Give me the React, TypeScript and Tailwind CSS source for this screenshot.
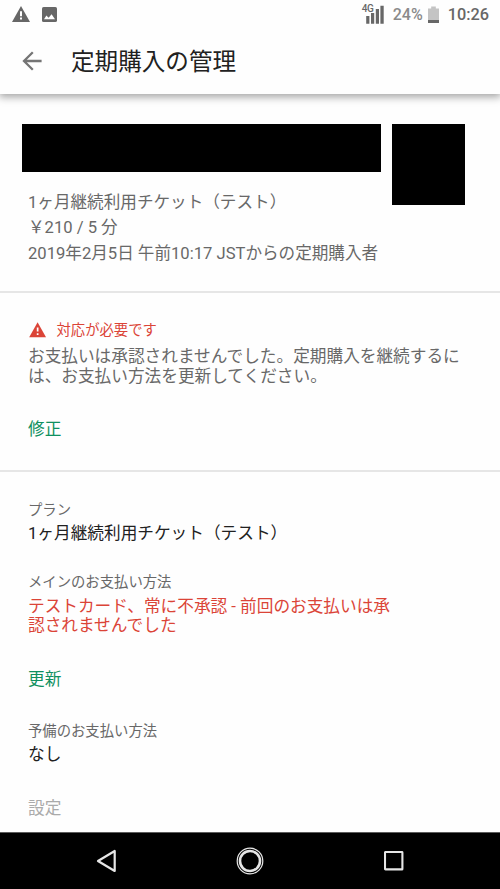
import type { ReactNode } from 'react'

function StatusBar() {
  return (
    <div className="flex h-[29px] items-center pl-3 pr-[11px] text-[#676767]">
      <svg width="18" height="16" viewBox="0 0 18 16" className="-mt-px mr-3">
        <path d="M9 0 18 16H0z" fill="currentColor" />
        <path d="M8 5.2h2v5H8zM8 11.6h2v2H8z" fill="#fff" />
      </svg>
      <svg width="15" height="15" viewBox="0 0 15 15" className="-mt-px">
        <rect width="15" height="15" rx="1.6" fill="currentColor" />
        <path d="M2 12.2 4.4 8.4 6.6 10.8 9.6 7.2 13 12.2z" fill="#fff" />
      </svg>

      <div className="ml-auto flex items-center">
        <div className="relative h-5 w-[22px]">
          <svg width="22" height="20" viewBox="0 0 22 20" className="absolute left-0 top-0">
            <path d="M4.2 11h3.2v7.8H4.2zM9 8h3.2v10.8H9zM13.8 4h3.2v14.8h-3.2zM18.4 0.8h3.3v18h-3.3z" fill="currentColor" />
          </svg>
          <span className="absolute left-0 -top-[1px] text-[10px] font-medium leading-[10px] tracking-[-0.4px]">4G</span>
        </div>
        <span className="ml-[9px] text-[16px] font-medium leading-5 text-[#8a8a8a]">24%</span>
        <svg width="11" height="18" viewBox="0 0 11 18" className="ml-[5px]">
          <path d="M3.2 0.5h4.6v2H11v12H0v-12h3.2z" fill="#c4c4c4" />
          <path d="M0 14h11v3H0z" fill="currentColor" />
        </svg>
        <span className="ml-[9px] text-[16.3px] font-medium leading-5">10:26</span>
      </div>
    </div>
  )
}

function AppBar() {
  return (
    <div className="flex h-[65px] items-center pl-[22px]">
      <svg width="20" height="20" viewBox="0 0 20 20" fill="none" stroke="#757575" strokeWidth="2.3" className="-mt-px mr-[29px]">
        <path d="M19.6 10H2.4M10.8 1.2 2 10l8.8 8.8" />
      </svg>
      <h1 className="pt-px text-[23.6px] leading-8 text-[#212121]">定期購入の管理</h1>
    </div>
  )
}

function Field({ label, children }: { label: string; children: ReactNode }) {
  return (
    <div>
      <p className="text-[14.35px] leading-5 text-[#686868]">{label}</p>
      {children}
    </div>
  )
}

function NavBar() {
  return (
    <nav className="flex h-[57px] shrink-0 items-center border-t border-[#5c5c5c] bg-black">
      <svg width="20" height="24" viewBox="0 0 20 24" fill="none" stroke="#e6e6e6" strokeWidth="2.2" strokeLinejoin="round" className="ml-[96px]">
        <path d="M18.7 2v20L2 12z" />
      </svg>
      <svg width="28" height="28" viewBox="0 0 28 28" fill="none" stroke="#e6e6e6" className="ml-[120px]">
        <circle cx="14" cy="14" r="12.8" strokeWidth="1.2" />
        <circle cx="14" cy="14" r="10" strokeWidth="2.6" />
      </svg>
      <svg width="20" height="20" viewBox="0 0 20 20" fill="none" stroke="#e6e6e6" strokeWidth="2.1" className="ml-[119.5px]">
        <rect x="1" y="1" width="17.4" height="17.4" rx="0.5" />
      </svg>
    </nav>
  )
}

export default function App() {
  return (
    <div className="flex h-[889px] w-[500px] flex-col overflow-hidden bg-[#fefefe] font-[Roboto,'Noto_Sans_CJK_JP',sans-serif] text-[16.66px]">
      <header className="relative h-[94px] shrink-0 bg-[#fefefe] shadow-[0_2px_8px_1px_rgba(0,0,0,0.36)]">
        <StatusBar />
        <AppBar />
      </header>

      <main className="flex-1">
        <section className="h-[199px] border-b-2 border-[#e6e6e6] pl-[22px] pt-[30px]">
          <div className="flex h-[65.5px] gap-[11px]">
            <div className="h-[48px] w-[358.5px] bg-black" />
            <div className="h-[81px] w-[73.5px] bg-black" />
          </div>
          <div className="pl-[6px] text-[16.6px] leading-[25.6px] text-[#686868]">
            <p>1ヶ月継続利用チケット（テスト）</p>
            <p>￥210 / 5 分</p>
            <p>2019年2月5日 午前10:17 JSTからの定期購入者</p>
          </div>
        </section>

        <section className="h-[179px] border-b-2 border-[#e6e6e6] pl-7 pt-[28px]">
          <div className="flex items-center text-[14.35px] leading-5 text-[#db4437]">
            <svg width="18" height="16" viewBox="0 0 18 16" className="-mt-[2px] mr-[10.5px]">
              <path d="M9.6 0.2 18 15.2H1.2z" fill="currentColor" />
              <path d="M8.8 5.6h1.7v4H8.8zM8.8 11.2h1.7v1.8H8.8z" fill="#fff" />
            </svg>
            対応が必要です
          </div>
          <p className="mt-[6px] leading-[19.7px] text-[#686868]">
            お支払いは承認されませんでした。定期購入を継続するに
            <br />
            は、お支払い方法を更新してください。
          </p>
          <button className="mt-[32px] block leading-6 text-[#0f9060]">修正</button>
        </section>

        <section className="pl-7 pt-[29px]">
          <Field label="プラン">
            <p className="mt-px leading-6 text-[#212121]">1ヶ月継続利用チケット（テスト）</p>
          </Field>
          <div className="mt-[27px]">
            <Field label="メインのお支払い方法">
              <p className="mt-1 leading-[19.4px] text-[#db4437]">
                テストカード、常に不承認 - 前回のお支払いは承
                <br />
                認されませんでした
              </p>
            </Field>
            <button className="mt-[32.6px] block leading-6 text-[#0f9060]">更新</button>
          </div>
          <div className="mt-[30px]">
            <Field label="予備のお支払い方法">
              <p className="mt-px leading-6 text-[#212121]">なし</p>
            </Field>
            <button className="mt-[30px] block leading-6 text-[#aaaaaa]">設定</button>
          </div>
        </section>
      </main>

      <NavBar />
    </div>
  )
}
